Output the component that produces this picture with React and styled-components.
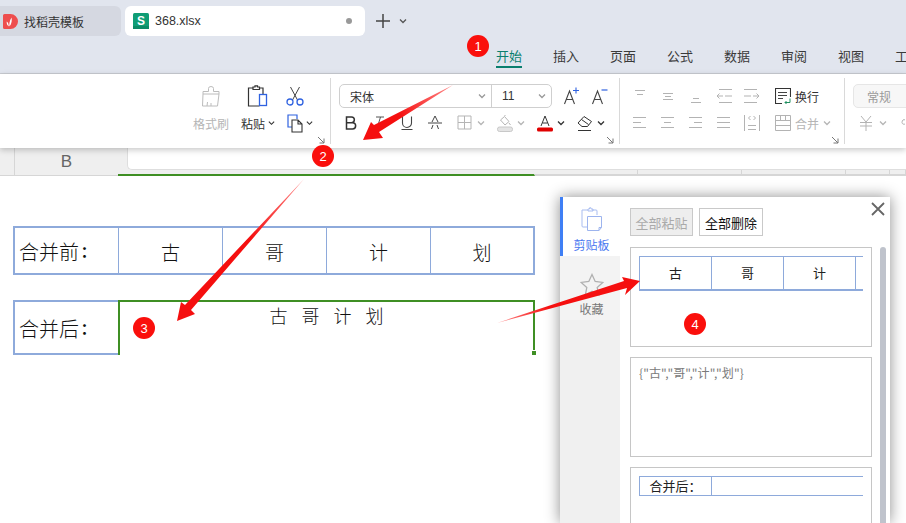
import React from 'react';
import styled, { createGlobalStyle } from 'styled-components';

const ui = '"Noto Sans CJK SC", "Noto Sans", sans-serif';

const Global = createGlobalStyle`
  html, body { margin: 0; padding: 0; background: #fff; }
  * { box-sizing: border-box; }
`;

const Page = styled.div`
  position: relative;
  width: 906px;
  height: 523px;
  overflow: hidden;
  display: flex;
  flex-direction: column;
  font-family: ${ui};
  color: #333;
`;

/* title bar */
const Header = styled.header`
  height: 74px;
  flex: none;
  background: #e1e5ee;
  border-bottom: 1px solid #c9ccd2;
  padding-top: 6px;
`;
const TabRow = styled.div`
  display: flex;
  align-items: center;
  height: 30px;
  gap: 4px;
`;
const DocTab = styled.div`
  display: flex;
  align-items: center;
  height: 30px;
  width: ${p => p.$w}px;
  padding-left: ${p => p.$pad}px;
  gap: ${p => p.$gap}px;
  font-size: ${p => p.$size}px;
  white-space: nowrap;
  color: #333;
  background: ${p => (p.$active ? '#fff' : '#d5d8e1')};
  border-radius: ${p => (p.$active ? '6px' : '0 6px 6px 0')};
  font-family: ${p => (p.$active ? '"Liberation Sans", sans-serif' : ui)};
`;
const UnsavedDot = styled.span`
  width: 6px;
  height: 6px;
  border-radius: 50%;
  background: #999;
  margin-left: auto;
  margin-right: 13px;
`;
const NewTab = styled.div`
  display: flex;
  align-items: center;
  gap: 9px;
  margin-left: 7px;
`;
const MenuRow = styled.nav`
  display: flex;
  gap: 31px;
  padding-left: 496px;
  margin-top: 10px;
  white-space: nowrap;
`;
const MenuItem = styled.span`
  height: 22px;
  line-height: 20px;
  font-size: 13px;
  color: ${p => (p.$active ? '#0a7f6e' : '#3a3a3a')};
  border-bottom: 2px solid ${p => (p.$active ? '#0a7f6e' : 'transparent')};
`;

/* ribbon */
const Ribbon = styled.section`
  position: relative;
  z-index: 2;
  flex: none;
  height: 74px;
  display: flex;
  background: #fff;
  box-shadow: 0 2px 6px rgba(0, 0, 0, 0.22);
`;
const Group = styled.div`
  position: relative;
  flex: none;
  width: ${p => p.$w}px;
  height: 66px;
  margin-top: 4px;
  padding: 6px 0 0 ${p => p.$pad || 0}px;
  border-right: 1px solid ${p => (p.$last ? 'transparent' : '#d9d9d9')};
`;
const ClipGroup = styled(Group)`
  display: grid;
  grid-template-columns: 36px 34px 30px;
  grid-template-rows: 24px 24px;
  column-gap: 12px;
  row-gap: 3px;
  justify-content: end;
  justify-items: center;
  align-items: center;
  padding-right: 13px;
`;
const LeftCell = styled.div`
  justify-self: start;
  display: flex;
  margin-left: ${p => p.$ml || 0}px;
`;
const ToolRow = styled.div`
  display: flex;
  align-items: center;
  height: 24px;
  margin-bottom: 3px;
`;
const ToolLabel = styled.span`
  display: flex;
  align-items: center;
  gap: ${p => (p.$off ? 4 : 3)}px;
  margin-left: ${p => p.$ml || 0}px;
  font-size: 12px;
  white-space: nowrap;
  color: ${p => (p.$off ? '#b5b5b5' : '#333')};
`;
const Launcher = styled.svg`
  position: absolute;
  right: 5px;
  bottom: 0;
`;
const FontBar = styled.div`
  width: 213px;
  height: 24px;
  margin-left: 2px;
  flex: none;
  display: flex;
  border: 1px solid #cfcfcf;
  border-radius: 5px;
  font-size: 12px;
`;
const FontField = styled.div`
  width: ${p => p.$w}px;
  flex: none;
  display: flex;
  align-items: center;
  justify-content: space-between;
  padding: 0 5px 0 ${p => p.$pad}px;
  & + & { border-left: 1px solid #cfcfcf; }
`;
const SizeValue = styled.span`
  font-family: "Liberation Sans", sans-serif;
`;
const Square = styled.span`
  width: ${p => p.$w || 28}px;
  margin-left: ${p => p.$ml || 0}px;
  display: flex;
  align-items: center;
  justify-content: center;
  flex: none;
`;
const DropTool = styled.span`
  width: 40px;
  padding-left: 8px;
  display: flex;
  align-items: center;
  gap: 4px;
  flex: none;
`;
const FormatSelect = styled.div`
  width: 100px;
  height: 24px;
  flex: none;
  padding-left: 13px;
  display: flex;
  align-items: center;
  font-size: 12px;
  color: #9a9a9a;
  background: #f7f7f7;
  border: 1px solid #e6e6e6;
  border-radius: 5px;
`;

/* column headers under the ribbon */
const SheetHead = styled.div`
  flex: none;
  height: 28px;
  display: flex;
`;
const CornerCell = styled.div`
  width: 15px;
  background: #efefef;
  border-right: 1px solid #d6d6d6;
  border-bottom: 1px solid #d6d6d6;
`;
const ColumnLetter = styled.div`
  width: 103px;
  display: flex;
  align-items: center;
  justify-content: center;
  font: 17px "Liberation Sans", sans-serif;
  color: #666;
  background: #efefef;
  border-bottom: 1px solid #d6d6d6;
`;
const FormulaSide = styled.div`
  flex: 1;
  display: flex;
  flex-direction: column;
  background: #efefef;
`;
const FormulaBar = styled.div`
  height: 22px;
  margin-left: 9px;
  background: #fff;
  border-left: 1px solid #dedede;
  border-bottom: 1px solid #dedede;
  border-radius: 0 0 0 5px;
`;
const ColumnStrip = styled.div`
  flex: 1;
  display: flex;
`;
const ColumnHead = styled.div`
  width: ${p => p.$w}px;
  flex: ${p => (p.$fill ? 1 : 'none')};
  border-right: 1px solid ${p => (p.$active ? 'transparent' : '#d6d6d6')};
  border-bottom: ${p => (p.$active ? '2px solid #3f8f24' : '2px solid #d6d6d6')};
`;

/* worksheet */
const Sheet = styled.main`
  flex: 1;
  padding: 50px 0 0 13px;
  background: #fff;
`;
const SheetTable = styled.div`
  display: grid;
  width: 522px;
  grid-template-columns: ${p => p.$cols};
  height: ${p => p.$h}px;
  margin-bottom: ${p => p.$mb || 0}px;
  font-size: 19px;
  font-weight: 300;
  color: #111;
  border: ${p => (p.$open ? 'none' : '2px solid #8eaadb')};
`;
const SheetCell = styled.div`
  display: flex;
  align-items: center;
  justify-content: ${p => (p.$label ? 'flex-start' : 'center')};
  padding-left: ${p => (p.$label ? 4 : 0)}px;
  padding-top: 2px;
  border-left: ${p => (p.$first ? 'none' : '1px solid #8eaadb')};
`;
const LabelText = styled.span`
  display: flex;
  align-items: center;
  font-size: 20px;
  white-space: nowrap;
`;
const Colon = styled.span`
  margin-left: -2px;
  font-family: "Noto Sans CJK TC", sans-serif;
  font-size: 15px;
  font-weight: 700;
`;
const LabelBox = styled(SheetCell)`
  border: 2px solid #8eaadb;
  border-right: none;
`;
const MergedCell = styled.div`
  position: relative;
  height: 55px;
  display: flex;
  justify-content: center;
  gap: 14px;
  line-height: 26px;
  font-size: 18px;
  border: 2px solid #3f8f24;
  border-bottom: none;
`;
const FillHandle = styled.i`
  position: absolute;
  right: -3px;
  bottom: 0;
  width: 4px;
  height: 5px;
  background: #3f8f24;
  border-top: 1px solid #fff;
`;

/* floating clipboard window */
const ClipWindow = styled.aside`
  position: absolute;
  z-index: 3;
  left: 560px;
  top: 197px;
  width: 330px;
  height: 326px;
  display: flex;
  background: #fff;
  box-shadow: 0 0 14px rgba(0, 0, 0, 0.45);
`;
const SideBar = styled.div`
  width: 60px;
  flex: none;
  background: #f0f0f0;
`;
const SideTab = styled.div`
  height: ${p => (p.$active ? 59 : 64)}px;
  padding-top: ${p => (p.$active ? 10 : 17)}px;
  display: flex;
  flex-direction: column;
  align-items: center;
  gap: ${p => (p.$active ? 5 : 3)}px;
  font-size: 12px;
  color: ${p => (p.$active ? '#4a78f0' : '#777')};
  background: ${p => (p.$active ? '#fff' : '#f3f3f3')};
  border-left: 3px solid ${p => (p.$active ? '#3f7ff5' : 'transparent')};
`;
const ClipMain = styled.div`
  flex: 1;
  padding: 11px 0 0 10px;
  display: flex;
  flex-direction: column;
  min-width: 0;
`;
const ButtonRow = styled.div`
  display: flex;
  gap: 6px;
  margin-bottom: 11px;
`;
const ClipButton = styled.button`
  width: ${p => p.$w}px;
  height: 28px;
  padding: 0;
  font: 13px ${ui};
  color: ${p => (p.$off ? '#aaa' : '#111')};
  background: ${p => (p.$off ? '#eee' : '#fff')};
  border: 1px solid #c9c9c9;
`;
const CardColumn = styled.div`
  display: flex;
  flex-direction: column;
  gap: 10px;
`;
const ClipCard = styled.div`
  width: 242px;
  height: 100px;
  padding: 8px;
  border: 1px solid #c6c6c6;
  flex: none;
  font-size: 12px;
  line-height: 14px;
  letter-spacing: 0.1px;
  color: #7a7a7a;
`;
const CardClip = styled.div`
  width: 224px;
  overflow: hidden;
`;
const MiniTable = styled.div`
  display: flex;
  width: 240px;
  height: ${p => p.$h}px;
  font-size: 13px;
  letter-spacing: 0;
  color: #222;
  border-top: 1px solid #8eaadb;
  border-bottom: ${p => p.$bottom}px solid #8eaadb;
`;
const MiniCell = styled.div`
  width: ${p => p.$w || 72}px;
  flex: none;
  display: flex;
  align-items: center;
  justify-content: center;
  border-left: 1px solid #8eaadb;
`;
const ScrollThumb = styled.div`
  position: absolute;
  left: 320px;
  top: 50px;
  width: 6px;
  height: 290px;
  border-radius: 3px;
  background: #bfc3cc;
`;
const CloseIcon = styled.svg`
  position: absolute;
  right: 5px;
  top: 5px;
`;

/* annotations drawn over the screenshot */
const Overlay = styled.svg`
  position: absolute;
  z-index: 4;
  left: 0;
  top: 0;
  pointer-events: none;
`;
const Badge = styled.span`
  position: absolute;
  z-index: 5;
  left: ${p => p.$x - 11}px;
  top: ${p => p.$y - 11}px;
  width: 22px;
  height: 22px;
  display: flex;
  align-items: center;
  justify-content: center;
  border-radius: 50%;
  font: 13px "Liberation Sans", sans-serif;
  color: #fff;
  background: #fa0f0c;
`;

const Chevron = ({ c = '#999', w = 8, sw = 1.3 }) => (
  <svg width={w} height="6" viewBox="0 0 8 6" fill="none" stroke={c} strokeWidth={sw}>
    <path d="M1 1.5l3 3 3-3" />
  </svg>
);

const Corner = () => (
  <Launcher width="8" height="8" viewBox="0 0 8 8" fill="none" stroke="#777">
    <path d="M1 1l6 6M7 2.5V7H2.5" />
  </Launcher>
);

const DocoLogo = () => (
  <svg width="15" height="15" viewBox="0 0 15 15">
    <path d="M1.500 0h6a7.500 7.500 0 010 15h-6A1.500 1.500 0 010 13.500v-12A1.500 1.500 0 011.500 0z" fill="#ee4d4d" />
    <path d="M6.500 12.500C6 10 6.500 7 8.500 3.500c.6 2.500.4 6-2 9zM5.800 12.500C4.300 11.500 3.500 9.500 3.700 7.500c1.300.8 2 2.500 2.100 5z" fill="#fff" />
  </svg>
);

const SheetLogo = () => (
  <svg width="16" height="16" viewBox="0 0 16 16">
    <rect width="16" height="16" rx="1.500" fill="#0f9d75" />
    <rect y="13" width="16" height="3" fill="#0b8a66" />
    <text x="8" y="11.500" textAnchor="middle" fontSize="12" fontWeight="700" fontFamily="Liberation Sans" fill="#fff">S</text>
  </svg>
);

const PainterIcon = () => (
  <svg width="20" height="21" viewBox="0 0 20 21" fill="none" stroke="#bcbcbc" strokeWidth="1">
    <path d="M2 8h16l-1.500 12H1.500zM2 8V5.500h5.500V2.500a2.500 2 0 015 0v3H18V8M6 20l.5-4M10 20v-3" />
  </svg>
);

const PasteIcon = () => (
  <svg width="22" height="22" viewBox="0 0 22 22" fill="none">
    <path d="M6 3H1.500v18h11M16 9V3h-4M6 4.500V2h2V.8h2.500V2h2v2.500z" stroke="#333" strokeWidth="1.200" />
    <rect x="12.500" y="9.500" width="7" height="11" stroke="#2f62e0" strokeWidth="1.300" />
  </svg>
);

const CutIcon = () => (
  <svg width="18" height="20" viewBox="0 0 18 20" fill="none">
    <path d="M4.500 1l7 13M13.500 1l-7 13" stroke="#444" />
    <circle cx="4" cy="16" r="3" stroke="#2f62e0" strokeWidth="1.300" />
    <circle cx="14" cy="16" r="3" stroke="#2f62e0" strokeWidth="1.300" />
  </svg>
);

const CopyIcon = () => (
  <svg width="16" height="19" viewBox="0 0 16 19" fill="none">
    <path d="M5 13H1V1h9v4" stroke="#2f62e0" strokeWidth="1.200" />
    <path d="M5 6h6l4 4v8H5zM11 6v4h4" stroke="#333" strokeWidth="1.100" />
  </svg>
);

const GrowIcon = ({ plus }) => (
  <svg width="18" height="18" viewBox="0 0 18 18" fill="none">
    <path d="M1.500 17L6.500 4l5 13M3.500 12.500h6" stroke="#444" strokeWidth="1.100" />
    {plus
      ? <path d="M10 3.500h6M13 .5v6" stroke="#2f62e0" strokeWidth="1.100" />
      : <path d="M10.500 3h6" stroke="#2f62e0" strokeWidth="1.200" />}
  </svg>
);

const BoldIcon = () => (
  <svg width="12" height="14" viewBox="0 0 12 14" fill="none" stroke="#333" strokeWidth="1.500">
    <path d="M1.500 1h5a2.800 2.800 0 010 5.700h-5zM1.500 6.700h6a3 3 0 010 6.300h-6z" />
  </svg>
);

const StyleGlyph = ({ italic, under, strike }) => (
  <svg width="16" height="16" viewBox="0 0 16 16" fill="none" stroke="#444">
    {italic && <path d="M5 2h8M9.500 2L6 13.500M2 14h6" strokeWidth="1" stroke="#555" />}
    {under && <path d="M3.500 1.500V8a4.500 4.500 0 009 0V1.500M2.500 14.500h11" strokeWidth="1.100" />}
    {strike && <path d="M5 7l3-6 3 6M1 8h14M4.500 14L6 10M11.500 14L10 10" strokeWidth="1" />}
  </svg>
);

const BorderIcon = () => (
  <svg width="16" height="16" viewBox="0 0 16 16" fill="none" stroke="#b5b5b5">
    <path d="M1 1h13v13H1zM7.500 1v13M1 7.500h13" />
  </svg>
);

const FillIcon = () => (
  <svg width="16" height="17" viewBox="0 0 16 17" fill="none">
    <path d="M3.500 5l4-3.500 4.500 5-4 3.500zM8 1V0M12 8l1.500 2" stroke="#b5b5b5" />
    <rect x=".5" y="12" width="15" height="4.500" rx="2" fill="#e4e4e4" stroke="#c8c8c8" />
  </svg>
);

const FontColorIcon = () => (
  <svg width="16" height="17" viewBox="0 0 16 17" fill="none">
    <path d="M4 11L8 1l4 10M5.500 8h5" stroke="#333" />
    <rect y="12.500" width="16" height="4" rx="1.500" fill="#e00000" />
  </svg>
);

const EraserIcon = () => (
  <svg width="16" height="16" viewBox="0 0 16 16" fill="none" stroke="#333">
    <path d="M1 8l6-6.500 7.500 5-4 5H5zM4.500 4.500l7 5M1 15.500h13" />
  </svg>
);

// alignment glyphs are rows of short lines, so they share one drawing
const LinesIcon = ({ rows, c = '#b3b3b3' }) => (
  <svg width="16" height="16" viewBox="0 0 16 16" stroke={c} fill="none">
    {rows.map(([x1, x2, y]) => <path key={y} d={`M${x1} ${y + 0.5}H${x2}`} />)}
  </svg>
);

const OutdentIcon = ({ flip }) => (
  <svg width="16" height="16" viewBox="0 0 16 16" stroke="#b3b3b3" fill="none">
    <g transform={flip ? 'translate(16 0) scale(-1 1)' : undefined}>
      <path d="M3 1.500h13M3 14.500h13M9 8h7" />
      <path d="M7 8H1m2.500-2.500L1 8l2.500 2.500" />
    </g>
  </svg>
);

const DistributeIcon = () => (
  <svg width="16" height="16" viewBox="0 0 16 16" stroke="#b3b3b3" fill="none">
    <path d="M.5 0v16M15.500 0v16M4 10.500h8M4 14.500h8M6.500 1L4.500 3l2 2M9.500 1l2 2-2 2" />
  </svg>
);

const WrapIcon = () => (
  <svg width="16" height="16" viewBox="0 0 16 16" fill="none">
    <path d="M7 15.500H.5V.5h15V9" stroke="#333" strokeWidth="1.100" />
    <path d="M3 4.500h9M3 7.500h9M3 10.500h5" stroke="#444" />
    <path d="M15 10.500v4H10m1.500-1.500L10 14.500l1.500 1.500" stroke="#1f8f5f" />
  </svg>
);

const MergeIcon = () => (
  <svg width="16" height="16" viewBox="0 0 16 16" fill="none" stroke="#b3b3b3">
    <path d="M.5 .5h15v15H.5zM.5 5.500h15M.5 10.500h15M5.500 .5v5M10.500 .5v5" />
  </svg>
);

const ClipTabIcon = () => (
  <svg width="24" height="24" viewBox="0 0 24 24" fill="none" stroke="#a9bdf0">
    <path d="M8 3H2v16a1 1 0 001 1h4M17 8V4a1 1 0 00-1-1h-4M8 4V2h1.500V.8h1.500V2H13v2z" />
    <path d="M7.500 9.500h14v11l-2.500 3h-11.500zM19 23.500V20.500h2.500" stroke="#9db4ee" />
  </svg>
);

const StarIcon = () => (
  <svg width="24" height="24" viewBox="0 0 24 24" fill="none" stroke="#b0b0b0" strokeWidth="1.300">
    <path d="M12 1.500l3.200 7 7.600 .9-5.600 5.200 1.500 7.500L12 18.300l-6.700 3.800 1.500-7.500-5.600-5.200 7.600-.9z" />
  </svg>
);

const align = {
  top: [[3, 13, 2], [5, 11, 6]],
  middle: [[3, 13, 5], [5, 11, 8], [3, 13, 11]],
  bottom: [[5, 11, 10], [3, 13, 14]],
  left: [[1, 14, 2], [1, 9, 7], [1, 14, 12]],
  center: [[1, 14, 2], [4, 11, 7], [1, 14, 12]],
  right: [[1, 14, 2], [6, 14, 7], [1, 14, 12]],
  justify: [[1, 14, 2], [1, 14, 7], [1, 14, 12]],
};

const tail = '#ff8a8a';

export default function App() {
  return (
    <Page>
      <Global />
      <Header>
        <TabRow>
          <DocTab $w={121} $pad={3} $gap={6} $size={12}><DocoLogo />找稻壳模板</DocTab>
          <DocTab $active $w={240} $pad={8} $gap={6} $size={12.5}>
            <SheetLogo />368.xlsx<UnsavedDot />
          </DocTab>
          <NewTab>
            <svg width="14" height="14" viewBox="0 0 14 14" stroke="#444" strokeWidth="1.500"><path d="M7 0v14M0 7h14" /></svg>
            <Chevron c="#555" />
          </NewTab>
        </TabRow>
        <MenuRow>
          <MenuItem $active>开始</MenuItem>
          {['插入', '页面', '公式', '数据', '审阅', '视图', '工具'].map(m => <MenuItem key={m}>{m}</MenuItem>)}
        </MenuRow>
      </Header>

      <Ribbon>
        <ClipGroup $w={331}>
          <PainterIcon />
          <PasteIcon />
          <LeftCell $ml={-1}><CutIcon /></LeftCell>
          <ToolLabel $off>格式刷</ToolLabel>
          <ToolLabel>粘贴<Chevron c="#333" w={7} /></ToolLabel>
          <LeftCell><ToolLabel><CopyIcon /><Chevron c="#333" w={7} /></ToolLabel></LeftCell>
          <Corner />
        </ClipGroup>

        <Group $w={289} $pad={6}>
          <ToolRow>
            <FontBar>
              <FontField $w={151} $pad={10}>宋体<Chevron /></FontField>
              <FontField $w={60} $pad={10}><SizeValue>11</SizeValue><Chevron /></FontField>
            </FontBar>
            <Square $ml={6}><GrowIcon plus /></Square>
            <Square><GrowIcon /></Square>
          </ToolRow>
          <ToolRow>
            <Square><BoldIcon /></Square>
            <Square><StyleGlyph italic /></Square>
            <Square><StyleGlyph under /></Square>
            <Square><StyleGlyph strike /></Square>
            <DropTool><BorderIcon /><Chevron c="#b5b5b5" /></DropTool>
            <DropTool><FillIcon /><Chevron c="#b5b5b5" /></DropTool>
            <DropTool><FontColorIcon /><Chevron c="#333" /></DropTool>
            <DropTool><EraserIcon /><Chevron c="#333" /></DropTool>
          </ToolRow>
          <Corner />
        </Group>

        <Group $w={225} $pad={6}>
          <ToolRow>
            <Square><LinesIcon rows={align.top} /></Square>
            <Square><LinesIcon rows={align.middle} /></Square>
            <Square><LinesIcon rows={align.bottom} /></Square>
            <Square><OutdentIcon /></Square>
            <Square><OutdentIcon flip /></Square>
            <Square $w={16} $ml={9}><WrapIcon /></Square>
            <ToolLabel $ml={4}>换行</ToolLabel>
          </ToolRow>
          <ToolRow>
            <Square><LinesIcon rows={align.left} /></Square>
            <Square><LinesIcon rows={align.center} /></Square>
            <Square><LinesIcon rows={align.right} /></Square>
            <Square><LinesIcon rows={align.justify} /></Square>
            <Square><DistributeIcon /></Square>
            <Square $w={16} $ml={9}><MergeIcon /></Square>
            <ToolLabel $off $ml={4}>合并<Chevron c="#b5b5b5" /></ToolLabel>
          </ToolRow>
          <Corner />
        </Group>

        <Group $w={61} $pad={8} $last>
          <ToolRow><FormatSelect>常规</FormatSelect></ToolRow>
          <ToolRow>
            <Square $w={26}>
              <svg width="14" height="16" viewBox="0 0 14 16" fill="none" stroke="#b3b3b3"><path d="M2 1l5 6 5-6M1 7.500h12M1 11h12M7 7v9" /></svg>
            </Square>
            <Chevron c="#b5b5b5" />
            <Square $w={4} $ml={14}>
              <svg width="4" height="8" viewBox="0 0 4 8" fill="none" stroke="#b3b3b3"><path d="M4 1a2 3 0 00-3 2.500A2 2 0 004 5" /></svg>
            </Square>
          </ToolRow>
        </Group>
      </Ribbon>

      <SheetHead>
        <CornerCell />
        <ColumnLetter>B</ColumnLetter>
        <FormulaSide>
          <FormulaBar />
          <ColumnStrip>
            <ColumnHead $w={417} $active />
            <ColumnHead $w={103} />
            <ColumnHead $w={104} />
            <ColumnHead $w={104} />
            <ColumnHead $w={44} />
            <ColumnHead $fill />
          </ColumnStrip>
        </FormulaSide>
      </SheetHead>

      <Sheet>
        <SheetTable $cols="103px 104px 104px 104px 103px" $h={49} $mb={25}>
          <SheetCell $first $label><LabelText>合并前<Colon>：</Colon></LabelText></SheetCell>
          <SheetCell>古</SheetCell>
          <SheetCell>哥</SheetCell>
          <SheetCell>计</SheetCell>
          <SheetCell>划</SheetCell>
        </SheetTable>
        <SheetTable $cols="105px 417px" $h={53} $open>
          <LabelBox $first $label><LabelText>合并后<Colon>：</Colon></LabelText></LabelBox>
          <MergedCell>
            <span>古</span><span>哥</span><span>计</span><span>划</span>
            <FillHandle />
          </MergedCell>
        </SheetTable>
      </Sheet>

      <ClipWindow>
        <SideBar>
          <SideTab $active><ClipTabIcon />剪贴板</SideTab>
          <SideTab><StarIcon />收藏</SideTab>
        </SideBar>
        <ClipMain>
          <ButtonRow>
            <ClipButton $off $w={63}>全部粘贴</ClipButton>
            <ClipButton $w={64}>全部删除</ClipButton>
          </ButtonRow>
          <CardColumn>
            <ClipCard>
              <CardClip>
                <MiniTable $h={35} $bottom={2}>
                  <MiniCell>古</MiniCell>
                  <MiniCell>哥</MiniCell>
                  <MiniCell>计</MiniCell>
                  <MiniCell />
                </MiniTable>
              </CardClip>
            </ClipCard>
            <ClipCard>{'{"古","哥","计","划"}'}</ClipCard>
            <ClipCard>
              <CardClip>
                <MiniTable $h={20} $bottom={1}>
                  <MiniCell>合并后：</MiniCell>
                  <MiniCell $w={168} />
                </MiniTable>
              </CardClip>
            </ClipCard>
          </CardColumn>
        </ClipMain>
        <ScrollThumb />
        <CloseIcon width="14" height="14" viewBox="0 0 14 14" stroke="#666" strokeWidth="1.800"><path d="M1 1l12 12M13 1L1 13" /></CloseIcon>
      </ClipWindow>

      <Overlay width="906" height="523" viewBox="0 0 906 523">
        <defs>
          <linearGradient id="a2" gradientUnits="userSpaceOnUse" x1="453" y1="85" x2="400" y2="118">
            <stop offset="0" stopColor={tail} /><stop offset="1" stopColor="#f50f0f" />
          </linearGradient>
          <linearGradient id="a3" gradientUnits="userSpaceOnUse" x1="304" y1="178" x2="250" y2="240">
            <stop offset="0" stopColor={tail} /><stop offset="1" stopColor="#f50f0f" />
          </linearGradient>
          <linearGradient id="a4" gradientUnits="userSpaceOnUse" x1="497" y1="323" x2="550" y2="308">
            <stop offset="0" stopColor={tail} /><stop offset="1" stopColor="#f50f0f" />
          </linearGradient>
        </defs>
        <path fill="url(#a2)" d="M453 85L379 132L383 138L363 140L371 122L374 125Z" />
        <path fill="url(#a3)" d="M304 179L191 310L195 314L177 321L181 302L185 305Z" />
        <path fill="url(#a4)" d="M497 323L624 281L622 277L640 281L625 295L627 288Z" />
      </Overlay>
      <Badge $x={478} $y={46}>1</Badge>
      <Badge $x={323} $y={156}>2</Badge>
      <Badge $x={144} $y={328}>3</Badge>
      <Badge $x={695} $y={324}>4</Badge>
    </Page>
  );
}
